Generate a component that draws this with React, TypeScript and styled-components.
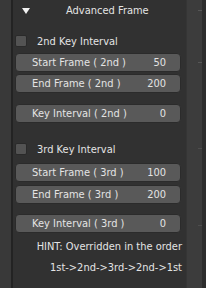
import styled, { createGlobalStyle } from 'styled-components'

const GlobalStyle = createGlobalStyle`
    html, body {
        margin: 0;
        padding: 0;
        background-color: #2c2c2c;
    }
`

const Screen = styled.div`
    display: flex;
    width: 206px;
    height: 288px;
    overflow: hidden;
    font-family: 'DejaVu Sans', 'Noto Sans', sans-serif;
    font-size: 9.9px;
    color: #e4e4e4;
`

const SideStrip = styled.div`
    width: 11px;
    background-color: #393939;
`

const Divider = styled.div`
    width: 2px;
    background-color: #232323;
`

const Panel = styled.div`
    width: 173px;
    padding: 0 5px 0 2px;
    box-sizing: border-box;
    display: flex;
    flex-direction: column;
    background-color: #313131;
`

const PanelHeader = styled.div`
    height: 21px;
    display: flex;
    align-items: center;
    padding-left: 7px;
`

const Triangle = styled.div`
    width: 0;
    height: 0;
    border-left: 4px solid transparent;
    border-right: 4px solid transparent;
    border-top: 6px solid #f2f2f2;
`

const HeaderTitle = styled.div`
    margin-left: 36px;
`

const CheckRow = styled.div<{ $top: number }>`
    display: flex;
    align-items: center;
    height: 12px;
    margin-top: ${p => p.$top}px;
`

const CheckBox = styled.div`
    width: 12px;
    height: 12px;
    box-sizing: border-box;
    border-radius: 2px;
    background-color: #535353;
    border: 1px solid #2a2a2a;
`

const CheckLabel = styled.div`
    margin-left: 10px;
`

const Field = styled.div<{ $top: number }>`
    display: flex;
    align-items: center;
    justify-content: space-between;
    height: 19px;
    box-sizing: border-box;
    margin-top: ${p => p.$top}px;
    padding: 0 14px 0 16px;
    border-radius: 4px;
    background-color: #595959;
    border: 1px solid #2b2b2b;
`

const Hint = styled.div<{ $top: number }>`
    text-align: right;
    line-height: 20px;
    margin-right: -1px;
    margin-top: ${p => p.$top}px;
`

const ScrollBand = styled.div`
    width: 16px;
    background-color: #3c3c3c;
    border-left: 1px solid #353535;
    box-sizing: border-box;
    background-image:
        linear-gradient(#565656, #565656),
        linear-gradient(#565656, #565656),
        linear-gradient(#4d4d4d, #4d4d4d),
        linear-gradient(#4d4d4d, #4d4d4d);
    background-size: 4px 1px;
    background-repeat: no-repeat;
    background-position: 11px 10px, 11px 62px, 11px 148px, 11px 225px;
`

const EdgeStrip = styled.div`
    flex: 1;
    background-color: #2d2d2d;
`

type FieldData = { label: string; value: string; top: number }

const Section = ({ title, top, fields }: { title: string; top: number; fields: FieldData[] }) => (
    <>
        <CheckRow $top={top}>
            <CheckBox />
            <CheckLabel>{title}</CheckLabel>
        </CheckRow>
        {fields.map(f => (
            <Field key={f.label} $top={f.top}>
                <span>{f.label}</span>
                <span>{f.value}</span>
            </Field>
        ))}
    </>
)

const App = () => {
    return (
        <>
            <GlobalStyle />
            <Screen>
                <SideStrip />
                <Divider />
                <Panel>
                    <PanelHeader>
                        <Triangle />
                        <HeaderTitle>{"Advanced Frame"}</HeaderTitle>
                    </PanelHeader>

                    <Section
                        title="2nd Key Interval"
                        top={14}
                        fields={[
                            { label: 'Start Frame ( 2nd )', value: '50', top: 6 },
                            { label: 'End Frame ( 2nd )', value: '200', top: 2 },
                            { label: 'Key Interval ( 2nd )', value: '0', top: 11 },
                        ]}
                    />

                    <Section
                        title="3rd Key Interval"
                        top={20}
                        fields={[
                            { label: 'Start Frame ( 3rd )', value: '100', top: 8 },
                            { label: 'End Frame ( 3rd )', value: '200', top: 3 },
                            { label: 'Key Interval ( 3rd )', value: '0', top: 10 },
                        ]}
                    />

                    <Hint $top={4}>{"HINT: Overridden in the order"}</Hint>
                    <Hint $top={1}>{"1st->2nd->3rd->2nd->1st"}</Hint>
                </Panel>
                <ScrollBand />
                <EdgeStrip />
            </Screen>
        </>
    )
}

export default App
